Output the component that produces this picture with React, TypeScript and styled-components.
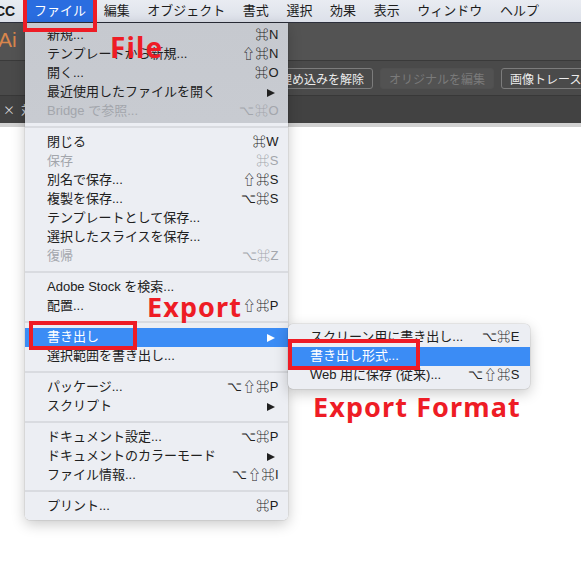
import React from 'react';
import styled, { createGlobalStyle } from 'styled-components';

const GlobalStyle = createGlobalStyle`
  html, body {
    margin: 0;
    padding: 0;
    background: #ffffff;
  }
  body {
    width: 581px;
    height: 563px;
    overflow: hidden;
    font-family: "Liberation Sans", "Noto Sans CJK JP", sans-serif;
  }
`;

// 画面全体
const Screen = styled.div`
  position: relative;
  width: 581px;
  height: 563px;
  overflow: hidden;
  display: flex;
  flex-direction: column;
  background: #ffffff;
`;

// macOS のメニューバー
const MenuBar = styled.div`
  height: 22px;
  display: flex;
  align-items: stretch;
  background: linear-gradient(#e9ecf2, #dce0e9);
  border-bottom: 1px solid #2c2f3b;
  font-size: 13px;
  color: #1c1c1c;
  white-space: nowrap;
`;

const AppName = styled.div`
  margin-left: -5px;
  padding-right: 10px;
  font-weight: 700;
  font-size: 14px;
  line-height: 22px;
`;

const BarItem = styled.div<{ $active?: boolean }>`
  padding: 0 8.8px;
  line-height: 22px;
  background: ${(p) => (p.$active ? '#2a6de0' : 'transparent')};
  color: ${(p) => (p.$active ? '#ffffff' : 'inherit')};
`;

// Illustrator のウィンドウ部分
const Chrome = styled.div`
  background: #535353;
  font-family: "Noto Sans CJK JP", sans-serif;
`;

const TopStrip = styled.div`
  height: 37px;
  display: flex;
  align-items: center;
  border-bottom: 1px solid #3a3a3a;
`;

const AiMark = styled.div`
  margin: -4px 0 0 -2px;
  font-family: "Liberation Sans", sans-serif;
  font-size: 21px;
  color: #d9864c;
`;

const ControlBar = styled.div`
  height: 34px;
  display: flex;
  align-items: center;
  gap: 7px;
  padding-left: 271px;
  background: #4a4a4a;
  border-bottom: 1px solid #383838;
  overflow: hidden;
  white-space: nowrap;
`;

const ToolButton = styled.div<{ $disabled?: boolean }>`
  flex: none;
  height: 21px;
  padding: 0 8px;
  display: flex;
  align-items: center;
  box-sizing: border-box;
  border-radius: 3px;
  font-size: 12px;
  border: 1px solid ${(p) => (p.$disabled ? '#505050' : '#7c7c7c')};
  background: ${(p) => (p.$disabled ? '#525252' : '#4a4a4a')};
  color: ${(p) => (p.$disabled ? '#7a7a7a' : '#ececec')};
`;

const TabBar = styled.div`
  height: 27px;
  display: flex;
  align-items: center;
  gap: 6px;
  padding-left: 3px;
  background: #424242;
  font-size: 12px;
  color: #d8d8d8;
  white-space: nowrap;
`;

const TabEdge = styled.div`
  height: 4px;
  background: #d2d2d2;
`;

const Canvas = styled.div`
  flex: 1;
  background: #ffffff;
`;

// ドロップダウンメニュー（上部は暗いウィンドウに重なるので少し暗い）
const Dropdown = styled.div<{ $left: number; $top: number; $width: number; $sub?: boolean }>`
  position: absolute;
  left: ${(p) => p.$left}px;
  top: ${(p) => p.$top}px;
  width: ${(p) => p.$width}px;
  padding: ${(p) => (p.$sub ? '4px 0' : '3px 0 4px')};
  background: ${(p) =>
    p.$sub ? '#eceef3' : 'linear-gradient(#c6c9cf 0, #c8cbd1 100px, #eceef3 100px)'};
  border-radius: ${(p) => (p.$sub ? '5px' : '0 0 5px 5px')};
  box-shadow: 0 4px 14px rgba(0, 0, 0, 0.22), 0 0 0 0.5px rgba(0, 0, 0, 0.12);
  font-size: 13px;
  white-space: nowrap;
`;

const Row = styled.div<{ $disabled?: boolean; $active?: boolean; $right: number }>`
  height: 19px;
  display: flex;
  align-items: center;
  justify-content: space-between;
  padding: 0 ${(p) => p.$right}px 0 22px;
  background: ${(p) => (p.$active ? '#3b8cf5' : 'transparent')};
  color: ${(p) => (p.$active ? '#ffffff' : p.$disabled ? '#a3a6ac' : '#202020')};
`;

const Label = styled.span`
  position: relative;
  top: -2px;
`;

const Keys = styled.span`
  position: relative;
  top: -2px;
  letter-spacing: 0.5px;
`;

const SubArrow = styled.span`
  width: 0;
  height: 0;
  margin-right: 4px;
  border-left: 8px solid currentColor;
  border-top: 4.5px solid transparent;
  border-bottom: 4.5px solid transparent;
`;

const Divider = styled.div`
  height: 2px;
  margin: 5px 0;
  background: rgba(0, 0, 0, 0.08);
`;

// 赤い注釈
const Note = styled.div<{ $left: number; $top: number; $size: number }>`
  position: absolute;
  left: ${(p) => p.$left}px;
  top: ${(p) => p.$top}px;
  font-family: "Noto Sans", sans-serif;
  font-weight: 700;
  font-size: ${(p) => p.$size}px;
  line-height: 1;
  letter-spacing: 1.1px;
  color: #ee1c25;
  white-space: nowrap;
`;

const Frame = styled.div<{ $left: number; $top: number; $w: number; $h: number }>`
  position: absolute;
  left: ${(p) => p.$left}px;
  top: ${(p) => p.$top}px;
  width: ${(p) => p.$w}px;
  height: ${(p) => p.$h}px;
  box-sizing: border-box;
  border: 4px solid #ee1c25;
`;

type Item =
  | { label: string; keys?: string; sub?: boolean; disabled?: boolean; active?: boolean }
  | 'sep';

const fileMenu: Item[] = [
  { label: '新規...', keys: '⌘N' },
  { label: 'テンプレートから新規...', keys: '⇧⌘N' },
  { label: '開く...', keys: '⌘O' },
  { label: '最近使用したファイルを開く', sub: true },
  { label: 'Bridge で参照...', keys: '⌥⌘O', disabled: true },
  'sep',
  { label: '閉じる', keys: '⌘W' },
  { label: '保存', keys: '⌘S', disabled: true },
  { label: '別名で保存...', keys: '⇧⌘S' },
  { label: '複製を保存...', keys: '⌥⌘S' },
  { label: 'テンプレートとして保存...' },
  { label: '選択したスライスを保存...' },
  { label: '復帰', keys: '⌥⌘Z', disabled: true },
  'sep',
  { label: 'Adobe Stock を検索...' },
  { label: '配置...', keys: '⇧⌘P' },
  'sep',
  { label: '書き出し', sub: true, active: true },
  { label: '選択範囲を書き出し...' },
  'sep',
  { label: 'パッケージ...', keys: '⌥⇧⌘P' },
  { label: 'スクリプト', sub: true },
  'sep',
  { label: 'ドキュメント設定...', keys: '⌥⌘P' },
  { label: 'ドキュメントのカラーモード', sub: true },
  { label: 'ファイル情報...', keys: '⌥⇧⌘I' },
  'sep',
  { label: 'プリント...', keys: '⌘P' },
];

const exportMenu: Item[] = [
  { label: 'スクリーン用に書き出し...', keys: '⌥⌘E' },
  { label: '書き出し形式...', active: true },
  { label: 'Web 用に保存 (従来)...', keys: '⌥⇧⌘S' },
];

const barItems = ['ファイル', '編集', 'オブジェクト', '書式', '選択', '効果', '表示', 'ウィンドウ', 'ヘルプ'];

const MenuItems: React.FC<{ items: Item[]; right: number }> = ({ items, right }) => (
  <>
    {items.map((item, i) =>
      item === 'sep' ? (
        <Divider key={i} />
      ) : (
        <Row key={i} $right={right} $disabled={item.disabled} $active={item.active}>
          <Label>{item.label}</Label>
          {item.sub ? <SubArrow /> : item.keys ? <Keys>{item.keys}</Keys> : null}
        </Row>
      )
    )}
  </>
);

export default function App() {
  return (
    <Screen>
      <GlobalStyle />
      <MenuBar>
        <AppName>CC</AppName>
        {barItems.map((name, i) => (
          <BarItem key={name} $active={i === 0}>
            {name}
          </BarItem>
        ))}
      </MenuBar>

      <Chrome>
        <TopStrip>
          <AiMark>Ai</AiMark>
        </TopStrip>
        <ControlBar>
          <ToolButton>埋め込みを解除</ToolButton>
          <ToolButton $disabled>オリジナルを編集</ToolButton>
          <ToolButton>画像トレース</ToolButton>
        </ControlBar>
        <TabBar>
          <span>×</span>
          <span>対象.ai @ 100%</span>
        </TabBar>
        <TabEdge />
      </Chrome>
      <Canvas />

      <Dropdown $left={25} $top={23} $width={263}>
        <MenuItems items={fileMenu} right={9} />
      </Dropdown>
      <Dropdown $left={288} $top={324} $width={242} $sub>
        <MenuItems items={exportMenu} right={10} />
      </Dropdown>

      <Frame $left={23} $top={-4} $w={74} $h={36} />
      <Frame $left={29} $top={321} $w={108} $h={29} />
      <Frame $left={288} $top={339} $w={132} $h={31} />

      <Note $left={110} $top={33} $size={28}>File</Note>
      <Note $left={147} $top={293} $size={27}>Export</Note>
      <Note $left={313} $top={393} $size={27}>Export Format</Note>
    </Screen>
  );
}
